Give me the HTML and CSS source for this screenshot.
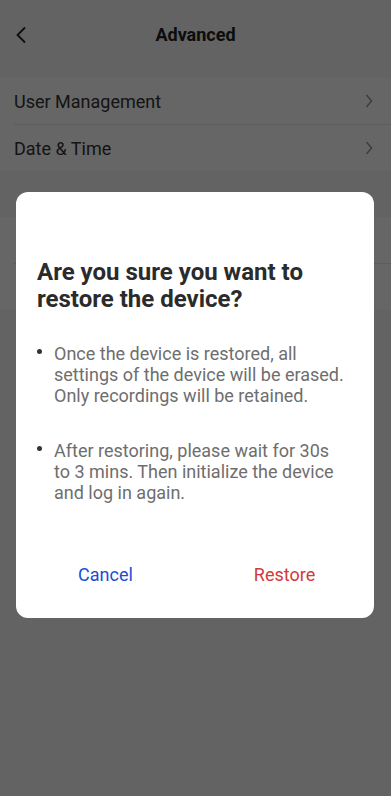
FILE: index.html
```
<!doctype html>
<html>
<head>
    <meta charset="utf-8">
    <meta name="viewport" content="width=device-width, initial-scale=1.0">
    <title>Advanced</title>
    <link rel="stylesheet" href="styles.css">
</head>
<body>
    <div class="page">
        <div class="header">
            <svg class="back" width="12" height="18" viewBox="0 0 12 18">
                <path d="M10 1.5 L2.5 9 L10 16.5" fill="none" stroke="#222" stroke-width="1.8"/>
            </svg>
            <span class="title">Advanced</span>
        </div>
        <div class="group">
            <div class="row">
                <span>User Management</span>
                <svg class="arrow" width="8" height="14" viewBox="0 0 8 14">
                    <path d="M1.5 1 L6.5 7 L1.5 13" fill="none" stroke="#999" stroke-width="1.5"/>
                </svg>
            </div>
            <div class="row">
                <span>Date &amp; Time</span>
                <svg class="arrow" width="8" height="14" viewBox="0 0 8 14">
                    <path d="M1.5 1 L6.5 7 L1.5 13" fill="none" stroke="#999" stroke-width="1.5"/>
                </svg>
            </div>
        </div>
        <div class="group">
            <div class="row"><span></span></div>
            <div class="row"><span></span></div>
        </div>
    </div>

    <div class="overlay">
        <div class="dialog">
            <div class="content">
                <h2>Are you sure you want to restore the device?</h2>
                <ul>
                    <li>Once the device is restored, all settings of the device will be erased. Only recordings will be retained.</li>
                    <li>After restoring, please wait for 30s to 3 mins. Then initialize the device and log in again.</li>
                </ul>
            </div>
            <div class="buttons">
                <button class="cancel">Cancel</button>
                <button class="restore">Restore</button>
            </div>
        </div>
    </div>
</body>
</html>
```
FILE: styles.css
```
html, body {
    margin: 0;
    padding: 0;
}
body {
    background-color: #f5f7f6;
    font-family: Roboto, "Noto Sans", sans-serif;
    height: 796px;
    overflow: hidden;
}
.header {
    height: 78px;
    display: flex;
    align-items: center;
    justify-content: center;
    position: relative;
    padding-bottom: 10px;
    box-sizing: border-box;
}
.back {
    position: absolute;
    left: 15px;
    top: 26px;
}
.title {
    font-size: 18px;
    font-weight: bold;
    color: #222;
}
.group {
    background-color: #fff;
    margin-bottom: 46px;
}
.row {
    height: 46px;
    margin-left: 14px;
    padding-right: 18px;
    display: flex;
    align-items: center;
    justify-content: space-between;
    font-size: 18px;
    color: #333;
}
.row + .row {
    border-top: 1px solid #e6e6e6;
}
.overlay {
    position: absolute;
    left: 0;
    top: 0;
    width: 100%;
    height: 796px;
    background-color: rgba(0, 0, 0, 0.6);
}
.dialog {
    margin: 192px 17px 0 16px;
    background-color: #fff;
    border-radius: 12px;
}
.content {
    padding: 67px 30px 0 21px;
}
h2 {
    margin: 0;
    font-size: 24px;
    line-height: 27px;
    font-weight: bold;
    color: #2b2b2b;
}
ul {
    list-style: none;
    margin: 30px 0 0 0;
    padding: 0;
}
li {
    position: relative;
    padding-left: 17px;
    font-size: 18px;
    line-height: 21px;
    color: #6e6e6e;
}
li + li {
    margin-top: 34px;
}
li::before {
    content: "";
    position: absolute;
    left: 0;
    top: 6px;
    width: 5px;
    height: 5px;
    border-radius: 50%;
    background-color: #333;
}
.buttons {
    display: flex;
    margin-top: 43px;
    padding-bottom: 16px;
}
.buttons button {
    flex: 1;
    height: 56px;
    border: none;
    background: none;
    font-family: Roboto, "Noto Sans", sans-serif;
    font-size: 18px;
}
.cancel {
    color: #1a4fcf;
}
.restore {
    color: #d23a3a;
}
```
